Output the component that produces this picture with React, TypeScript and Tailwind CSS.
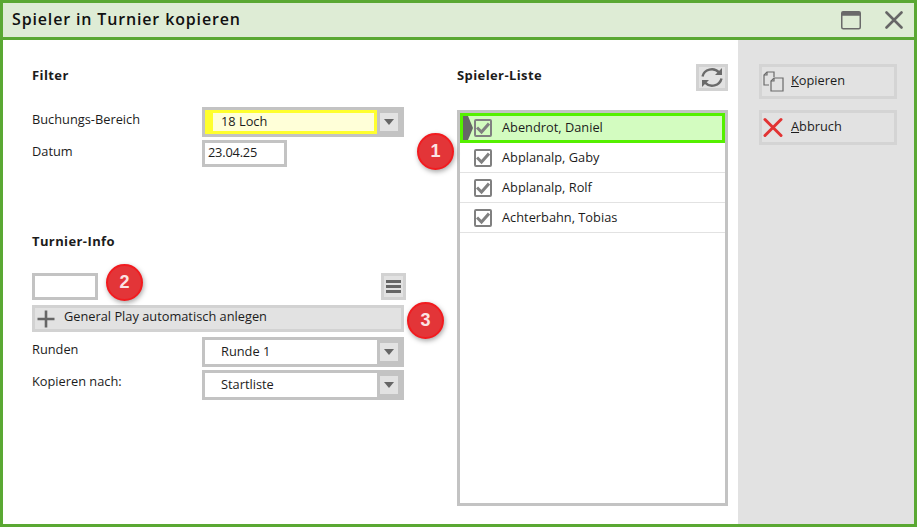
import React from 'react';

const players = ['Abendrot, Daniel', 'Abplanalp, Gaby', 'Abplanalp, Rolf', 'Achterbahn, Tobias'];

const Badge: React.FC<{ n: number; className: string }> = ({ n, className }) => (
  <div
    className={`absolute w-[37px] h-[37px] rounded-full bg-[#e33538] border-2 border-[#f21b1f] shadow-[1px_2px_5px_rgba(0,0,0,0.35)] flex items-center justify-center text-[#fbe4e4] text-[18px] font-bold font-['Liberation_Sans',sans-serif] ${className}`}
  >
    {n}
  </div>
);

const Select: React.FC<{ value: string; highlight?: boolean }> = ({ value, highlight }) => (
  <div className="w-[202px] h-[30px] border-[3px] border-[#c3c3c3] bg-white flex">
    {highlight ? (
      <div className="flex-1 border-[3px] border-[#ffff2e] border-l-[8px] bg-[#ffffd8] pl-[8px] leading-[16px]">{value}</div>
    ) : (
      <div className="flex-1 pl-[16px] leading-[22px]">{value}</div>
    )}
    <div className="w-[24px] bg-[#c3c3c3] flex items-center justify-center">
      <div className="w-[18px] h-[18px] bg-[#e2e2e2] flex items-center justify-center">
        <div className="w-0 h-0 border-l-[5px] border-r-[5px] border-t-[6px] border-l-transparent border-r-transparent border-t-[#666666]" />
      </div>
    </div>
  </div>
);

const Row: React.FC<{ label: string; children: React.ReactNode; className?: string; labelClass?: string }> = ({
  label,
  children,
  className,
  labelClass,
}) => (
  <div className={`flex ${className ?? ''}`}>
    <div className={`w-[170px] h-[24px] ${labelClass ?? 'leading-[24px]'}`}>{label}</div>
    {children}
  </div>
);

const App: React.FC = () => {
  return (
    <div className="w-[917px] h-[527px] border-[3px] border-[#5aa833] bg-white flex flex-col overflow-hidden font-['Open_Sans',sans-serif] text-[12.8px] text-[#1c1c1c]">
      <div className="h-[37px] shrink-0 border-b-[3px] border-[#5aa833] bg-[#deecd5] flex items-center justify-between pl-[9px] pr-[11px]">
        <div className="text-[16px] font-semibold tracking-[0.85px] text-[#111111] -mt-[2px]">Spieler in Turnier kopieren</div>
        <div className="flex items-center gap-[24px]">
          <svg width="20" height="19" viewBox="0 0 20 19">
            <rect x="0.75" y="0.75" width="18.5" height="17" rx="1.5" fill="none" stroke="#6a6a6a" strokeWidth="1.5" />
            <rect x="0.75" y="0.75" width="18.5" height="4" fill="#6a6a6a" />
          </svg>
          <svg width="18" height="18" viewBox="0 0 18 18">
            <path d="M1.5 1.5 L16.5 16.5 M16.5 1.5 L1.5 16.5" stroke="#666666" strokeWidth="2.6" strokeLinecap="round" />
          </svg>
        </div>
      </div>

      <div className="flex-1 flex min-h-0">
        <div className="relative w-[735px] shrink-0 flex pl-[29px] pt-[24px]">
          <div className="w-[372px] shrink-0">
            <div className="h-[22px] leading-[22px] text-[13px] font-bold tracking-[0.4px]">Filter</div>
            <Row label="Buchungs-Bereich" className="mt-[21px]">
              <Select value="18 Loch" highlight />
            </Row>
            <Row label="Datum" className="mt-[3px]" labelClass="leading-[22px]">
              <div className="w-[85px] h-[27px] border-[3px] border-[#c3c3c3] pl-[3px] leading-[18px] tracking-[-0.2px]">23.04.25</div>
            </Row>
            <div className="h-[22px] leading-[22px] text-[13px] font-bold tracking-[0.4px] mt-[63px]">Turnier-Info</div>
            <div className="flex justify-between mt-[21px] w-[374px]">
              <div className="w-[66px] h-[27px] border-[3px] border-[#c3c3c3] bg-white" />
              <div className="w-[25px] h-[27px] border-[3px] border-[#d2d2d2] bg-[#e2e2e2] flex flex-col items-center justify-center gap-[2px]">
                <div className="w-[15px] h-[3px] bg-[#666666]" />
                <div className="w-[15px] h-[3px] bg-[#666666]" />
                <div className="w-[15px] h-[3px] bg-[#666666]" />
              </div>
            </div>
            <div className="mt-[5px] h-[27px] border-[3px] border-[#d2d2d2] bg-[#e2e2e2] flex items-center pl-[2px]">
              <svg width="18" height="18" viewBox="0 0 18 18">
                <path d="M9 0.5 V17.5 M0.5 9 H17.5" stroke="#666666" strokeWidth="2.6" />
              </svg>
              <span className="ml-[9px] -mt-[3px]">General Play automatisch anlegen</span>
            </div>
            <Row label="Runden" className="mt-[5px]">
              <Select value="Runde 1" />
            </Row>
            <Row label="Kopieren nach:" className="mt-[3px]" labelClass="leading-[22px]">
              <Select value="Startliste" />
            </Row>
          </div>

          <div className="ml-[53px] w-[271px] shrink-0">
            <div className="h-[27px] flex justify-between">
              <div className="h-[22px] leading-[22px] text-[13px] font-bold tracking-[0.4px]">Spieler-Liste</div>
              <div className="w-[32px] h-[27px] border-[3px] border-[#d2d2d2] bg-[#e2e2e2] flex items-center justify-center">
                <svg width="22" height="21" viewBox="0 0 22 21" fill="none" stroke="#6a6a6a" strokeWidth="2.4">
                  <path d="M1.5 9.5 A9.5 9 0 0 1 18 5.5" />
                  <path d="M20.5 11.5 A9.5 9 0 0 1 4 15.5" />
                  <path d="M21 1 V8 H14 Z" fill="#6a6a6a" stroke="none" />
                  <path d="M1 20 V13 H8 Z" fill="#6a6a6a" stroke="none" />
                </svg>
              </div>
            </div>
            <div className="mt-[19px] h-[396px] border-[3px] border-[#c3c3c3]">
              {players.map((p, i) => (
                <div
                  key={p}
                  className={`relative h-[30px] flex items-center ${i === 0 ? 'border-[3px] border-[#55f000] bg-[#d3fcc0] pl-[11px]' : 'border-b border-[#e2e2e2] pl-[14px]'}`}
                >
                  {i === 0 && (
                    <svg className="absolute left-0 top-0" width="10" height="24" viewBox="0 0 10 24">
                      <path d="M0 0 H5 L10 12 L5 24 H0 Z" fill="#666666" />
                    </svg>
                  )}
                  <div className="w-[18px] h-[18px] border-2 border-[#808080] rounded-[2px] flex items-center justify-center">
                    <svg width="14" height="14" viewBox="0 0 14 14">
                      <path d="M1 6.5 L5.5 11 L13 2.5" fill="none" stroke="#808080" strokeWidth="3" />
                    </svg>
                  </div>
                  <span className={`ml-[10px] ${i === 0 ? '-mt-[1px]' : ''}`}>{p}</span>
                </div>
              ))}
            </div>
          </div>

          <Badge n={1} className="left-[414px] top-[93px]" />
          <Badge n={2} className="left-[103px] top-[224px]" />
          <Badge n={3} className="left-[404px] top-[262px]" />
        </div>

        <div className="flex-1 bg-[#e2e2e2] pl-[21px] pt-[24px]">
          <button className="w-[138px] h-[35px] border-[3px] border-[#d4d4d4] flex items-center pl-[1px] text-[#1c1c1c]">
            <svg width="21" height="21" viewBox="0 0 21 21" fill="none" stroke="#6a6a6a" strokeWidth="1.2">
              <path d="M6 14 H1 V4 L4 1 H11 V6" />
              <path d="M4 1 V4 H1" />
              <path d="M8 20 V10 L11 7 H20 V20 Z" fill="#e2e2e2" />
              <path d="M11 7 V10 H8" />
            </svg>
            <span className="ml-[7px] -mt-[2px]"><span className="underline">K</span>opieren</span>
          </button>
          <button className="mt-[11px] w-[138px] h-[35px] border-[3px] border-[#d4d4d4] flex items-center pl-[1px] text-[#1c1c1c]">
            <svg width="20" height="21" viewBox="0 0 20 21">
              <path d="M2 2.5 L18 18.5 M18 2.5 L2 18.5" stroke="#e23333" strokeWidth="3" strokeLinecap="round" />
            </svg>
            <span className="ml-[8px] -mt-[2px]"><span className="underline">A</span>bbruch</span>
          </button>
        </div>
      </div>
    </div>
  );
};

export default App;
